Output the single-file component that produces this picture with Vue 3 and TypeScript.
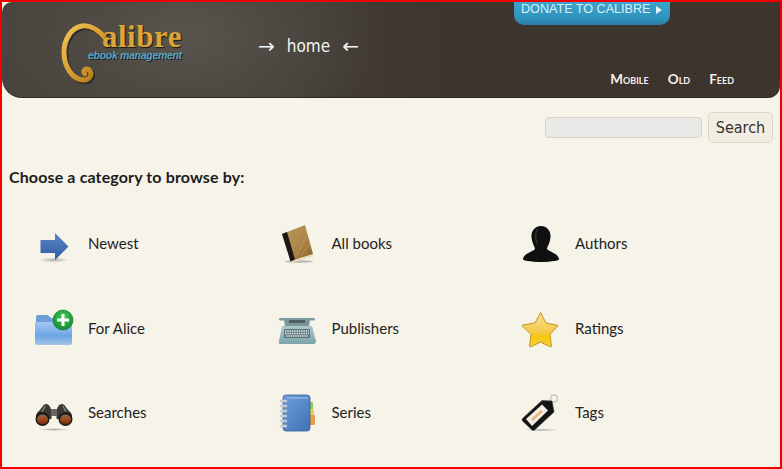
<script setup lang="ts">
interface Cat { key: string; label: string }
const cats: Cat[] = [
  { key: 'newest', label: 'Newest' },
  { key: 'books', label: 'All books' },
  { key: 'authors', label: 'Authors' },
  { key: 'alice', label: 'For Alice' },
  { key: 'publishers', label: 'Publishers' },
  { key: 'ratings', label: 'Ratings' },
  { key: 'searches', label: 'Searches' },
  { key: 'series', label: 'Series' },
  { key: 'tags', label: 'Tags' },
]
</script>

<template>
  <div class="page">
    <header class="masthead">
      <a class="logo">
        <svg class="swirl" width="70" height="70" viewBox="0 0 70 70">
          <defs>
            <linearGradient id="gold" x1="0" y1="0" x2="1" y2="1">
              <stop offset="0" stop-color="#f0c55a" />
              <stop offset="0.55" stop-color="#d59a2c" />
              <stop offset="1" stop-color="#a86f18" />
            </linearGradient>
          </defs>
          <path d="M46 19C39 10 30 5 22 6C10 8 4 21 4 32C4 46 12 60 24 60C32 60 33 50 27 49C24 49 23 52 25 54" fill="none" stroke="#1f1a14" stroke-opacity=".6" stroke-width="5.500" stroke-linecap="round" transform="translate(1.500 1.500)" />
          <path d="M46 19C39 10 30 5 22 6C10 8 4 21 4 32C4 46 12 60 24 60C32 60 33 50 27 49C24 49 23 52 25 54" fill="none" stroke="url(#gold)" stroke-width="5" stroke-linecap="round" />
        </svg>
        <span class="word">alibre</span>
        <span class="tagline">ebook management</span>
      </a>
      <h1 class="title"><span class="arrow">→</span><span>home</span><span class="arrow">←</span></h1>
      <div class="side">
        <a class="donate">DONATE TO CALIBRE<i class="tri"></i></a>
        <nav class="nav">
          <a>Mobile</a>
          <a>Old</a>
          <a>Feed</a>
        </nav>
      </div>
    </header>

    <form class="search" @submit.prevent>
      <input class="query" type="text" />
      <button class="go" type="submit">Search</button>
    </form>

    <h2 class="lead">Choose a category to browse by:</h2>

    <ul class="cats">
      <li v-for="c in cats" :key="c.key" class="cat">
        <svg class="icon" width="40" height="40" viewBox="0 0 40 40">
          <template v-if="c.key === 'newest'">
            <defs>
              <linearGradient id="arrowG" x1="0" y1="0" x2="0" y2="1">
                <stop offset="0" stop-color="#5a86c4" />
                <stop offset="1" stop-color="#2f5ca3" />
              </linearGradient>
              <radialGradient id="sh"><stop offset="0" stop-color="#000" stop-opacity=".3" /><stop offset="1" stop-color="#000" stop-opacity="0" /></radialGradient>
            </defs>
            <ellipse cx="20" cy="37" rx="15" ry="2.500" fill="url(#sh)" />
            <path d="M6.500 17H21V10L34.500 23.500L21 37V30H6.500Z" fill="url(#arrowG)" />
          </template>
          <template v-else-if="c.key === 'books'">
            <defs>
              <linearGradient id="bookG" x1="0" y1="0" x2="1" y2="1">
                <stop offset="0" stop-color="#bb9658" />
                <stop offset=".5" stop-color="#b08a4c" />
                <stop offset="1" stop-color="#8a6128" />
              </linearGradient>
            </defs>
            <ellipse cx="21" cy="38.500" rx="14" ry="1.500" fill="#000" fill-opacity=".22" />
            <path d="M4 11L27 2L35 31L13 38Z" fill="url(#bookG)" />
            <path d="M4 11L9 9L17 36.500L12.500 38.500Z" fill="#1b1815" />
            <path d="M13 38.500L35 31.500L35.500 33L14 40Z" fill="#e6dcc4" />
            <path d="M19 32L30 10M23 33L32 20" stroke="#d8bd8a" stroke-opacity=".45" stroke-width=".8" />
          </template>
          <template v-else-if="c.key === 'authors'">
            <ellipse cx="20" cy="36" rx="18" ry="3" fill="#000" />
            <path d="M20 3C26 3 30 8 29.500 14C29 20 26.500 23 26 26C28 29 37 30 38 36C30 39 10 39 2 36C3 30 12 29 14 26C13.500 23 11 20 10.500 14C10 8 14 3 20 3Z" fill="#101010" />
            <path d="M17 6C14 9 14 15 16 20" stroke="#333" stroke-width="1.500" fill="none" />
          </template>
          <template v-else-if="c.key === 'alice'">
            <defs>
              <linearGradient id="folderG" x1="0" y1="0" x2="0" y2="1">
                <stop offset="0" stop-color="#a3c8f2" />
                <stop offset=".6" stop-color="#6ea5e6" />
                <stop offset="1" stop-color="#a3c4e8" />
              </linearGradient>
              <radialGradient id="plusG" cx=".5" cy=".35" r=".7">
                <stop offset="0" stop-color="#3dc95a" />
                <stop offset="1" stop-color="#0d8a2a" />
              </radialGradient>
            </defs>
            <path d="M2 9C2 7.500 3 7 4 7H14L17 10H30C32 10 33 11 33 12V16H2Z" fill="#6f9ed9" />
            <path d="M1 14H38V35C38 36 37 37 36 37H3C2 37 1 36 1 35Z" fill="url(#folderG)" />
            <circle cx="29" cy="12" r="10" fill="url(#plusG)" stroke="#0a6d20" stroke-width=".6" />
            <path d="M29 6V18M23 12H35" stroke="#fff" stroke-width="3" />
          </template>
          <template v-else-if="c.key === 'publishers'">
            <defs>
              <linearGradient id="typeG" x1="0" y1="0" x2="0" y2="1">
                <stop offset="0" stop-color="#a9cacc" />
                <stop offset="1" stop-color="#7aa4aa" />
              </linearGradient>
            </defs>
            <rect x="1" y="10" width="36" height="2.500" rx="1.200" fill="#7d9a9e" />
            <path d="M6 12L7 19H31L32 12Z" fill="#7d9599" />
            <path d="M11 12H27V15H11Z" fill="#4c5f62" />
            <path d="M4 18H34L38 33C38 35 37 36 36 36H2C1 36 0.500 35 1 33Z" fill="url(#typeG)" />
            <rect x="6" y="21" width="26" height="9" rx="1" fill="#5a7175" />
            <path d="M7 23H31M7 25.500H31M8 28H30" stroke="#e8eeee" stroke-width="1.300" stroke-dasharray="1.500 .8" />
          </template>
          <template v-else-if="c.key === 'ratings'">
            <defs>
              <linearGradient id="starG" x1="0" y1="0" x2="0" y2="1">
                <stop offset="0" stop-color="#f9df8e" />
                <stop offset=".55" stop-color="#f5cb4e" />
                <stop offset=".7" stop-color="#f6c90e" />
                <stop offset="1" stop-color="#f0d040" />
              </linearGradient>
            </defs>
            <path d="M19.500 4.500L25 15L37 17.500L29 26.500L30.500 38C30.500 39 29.500 39 28.500 38.500L19.500 34L10.500 38.500C9.500 39 8.500 39 8.500 38L10 26.500L1.500 18C1 17.500 1.500 17 2 17L14 15Z" fill="url(#starG)" stroke="#c2941c" stroke-width="1" stroke-linejoin="round" />
          </template>
          <template v-else-if="c.key === 'searches'">
            <defs>
              <linearGradient id="lensG" x1="0" y1="0" x2="0" y2="1">
                <stop offset="0" stop-color="#8f6a4a" />
                <stop offset=".5" stop-color="#a0481d" />
                <stop offset="1" stop-color="#6a2a10" />
              </linearGradient>
              <radialGradient id="sh2"><stop offset="0" stop-color="#000" stop-opacity=".3" /><stop offset="1" stop-color="#000" stop-opacity="0" /></radialGradient>
            </defs>
            <ellipse cx="20" cy="37.500" rx="16" ry="1.500" fill="url(#sh2)" />
            <path d="M12 12C15 12 17 15 17.500 20L17.500 27H3C1 25 2 21 5 19C8 16 9 12 12 12Z" fill="#3b3835" />
            <path d="M28 12C25 12 23 15 22.500 20L22.500 27H37C39 25 38 21 35 19C32 16 31 12 28 12Z" fill="#3b3835" />
            <path d="M11 14L8 20M29 14L32 20" stroke="#8c8985" stroke-width="1.200" />
            <rect x="17" y="17" width="6" height="7" fill="#6a6764" />
            <circle cx="8.500" cy="27" r="7" fill="#1c1a18" />
            <circle cx="31.500" cy="27" r="7" fill="#1c1a18" />
            <ellipse cx="8.500" cy="27.500" rx="5.500" ry="5" fill="url(#lensG)" />
            <ellipse cx="31.500" cy="27.500" rx="5.500" ry="5" fill="url(#lensG)" />
          </template>
          <template v-else-if="c.key === 'series'">
            <defs>
              <linearGradient id="noteG" x1="0" y1="0" x2="1" y2="1">
                <stop offset="0" stop-color="#6f9fd8" />
                <stop offset="1" stop-color="#3f72b8" />
              </linearGradient>
            </defs>
            <rect x="30" y="10" width="5" height="13" rx="1" fill="#8cc85a" />
            <rect x="30" y="17" width="6" height="7" fill="#e5d34d" />
            <rect x="30" y="23" width="7" height="10" rx="1" fill="#ef9c43" />
            <rect x="5" y="3" width="27" height="36" rx="3" fill="url(#noteG)" stroke="#34609e" stroke-width=".8" />
            <path d="M9 6H30" stroke="#a9c8ec" stroke-width="1" />
            <path d="M3 9H8M3 14H8M3 19H8M3 24H8M3 29H8M3 34H8" stroke="#c9ccd2" stroke-width="2.400" stroke-linecap="round" />
          </template>
          <template v-else>
            <defs>
              <radialGradient id="sh3"><stop offset="0" stop-color="#000" stop-opacity=".3" /><stop offset="1" stop-color="#000" stop-opacity="0" /></radialGradient>
            </defs>
            <ellipse cx="20" cy="38" rx="17" ry="1.600" fill="url(#sh3)" />
            <circle cx="33" cy="6.500" r="3.500" fill="none" stroke="#c8c8c4" stroke-width="1.600" />
            <path d="M1.500 26.500L21 8.500L31 9L33 20L13.500 38C12.500 38.500 11.500 38.500 10.500 37.500L1.500 29C1 28 1 27.500 1.500 26.500Z" fill="#141414" stroke="#333" stroke-width=".6" />
            <path d="M5 27L21 12.500L27 18.500L11 34Z" fill="#f3efe4" />
            <path d="M10 27L20 18L22 19.500L12 29Z" fill="#eeb47c" />
          </template>
        </svg>
        <a class="label">{{ c.label }}</a>
      </li>
    </ul>
  </div>
</template>

<style>
html, body { margin: 0; padding: 0; background: #ffffff; }
</style>

<style scoped>
.page {
  box-sizing: border-box;
  width: 782px;
  height: 469px;
  border: 2px solid #f00000;
  background: #f6f3e9;
  overflow: hidden;
  font-family: Lato, "Open Sans", sans-serif;
  color: #222;
}
.masthead {
  display: flex;
  align-items: flex-start;
  height: 96px;
  border-radius: 10px 0 12px 20px;
  background:
    radial-gradient(ellipse 200px 120px at 180px 35px, #59544e 0%, rgba(82, 77, 71, .7) 45%, rgba(70, 65, 59, 0) 100%),
    linear-gradient(90deg, #47433d 0%, #46413b 30%, #3c342d 62%, #3c342d 100%);
  box-shadow: inset 0 -1px 0 #2c2722;
}
.logo {
  position: relative;
  display: block;
  flex: none;
  width: 130px;
  height: 70px;
  margin: 18px 0 0 58px;
}
.swirl { position: absolute; left: 0; top: 0; }
.word {
  position: absolute;
  left: 42px;
  top: 4px;
  font: bold 31px/25px "Liberation Serif", serif;
  letter-spacing: .5px;
  color: #dca636;
  text-shadow: 1px 1px 1px #191510;
}
.tagline {
  position: absolute;
  left: 28px;
  top: 29px;
  font: italic bold 10.500px/13px "Liberation Sans", sans-serif;
  letter-spacing: -.3px;
  color: #54a7c7;
  text-shadow: 1px 1px 0 #24211d;
  white-space: nowrap;
}
.title {
  display: flex;
  align-items: center;
  gap: 12px;
  flex: none;
  width: 265px;
  margin: 32px 0 0 68px;
  font: normal 17px/24px "DejaVu Sans", sans-serif;
  font-stretch: condensed;
  color: #f4f4f0;
}
.arrow { font-family: "DejaVu Sans", sans-serif; font-size: 20px; font-stretch: normal; }
.side {
  flex: none;
  display: flex;
  flex-direction: column;
  align-items: flex-start;
  width: 220px;
  height: 96px;
  margin-left: -9px;
}
.donate {
  display: flex;
  align-items: flex-start;
  box-sizing: border-box;
  width: 156px;
  height: 23px;
  padding: 1px 0 0 7px;
  border-radius: 0 0 10px 10px;
  background: linear-gradient(180deg, #3ca4cd 0%, #2f93bd 70%, #2a7ea6 100%);
  font: 12.600px/13px "Liberation Sans", sans-serif;
  color: #dceef5;
  white-space: nowrap;
}
.tri {
  width: 0;
  height: 0;
  margin: 3px 0 0 6px;
  border-left: 6px solid #e6f2f7;
  border-top: 4px solid transparent;
  border-bottom: 4px solid transparent;
}
.nav {
  display: flex;
  justify-content: flex-end;
  gap: 19px;
  width: 100%;
  margin-top: auto;
  padding-bottom: 10px;
  font: bold 13.500px/18px Lato, sans-serif;
  font-variant: small-caps;
  color: #f2f0ea;
}
.search {
  display: flex;
  justify-content: flex-end;
  align-items: center;
  gap: 6px;
  height: 31px;
  margin-top: 14px;
  padding-right: 7px;
}
.query {
  box-sizing: border-box;
  width: 157px;
  height: 21px;
  padding: 0;
  border: 1px solid #d9d4c5;
  border-radius: 4px;
  background: #e9e9e7;
}
.go {
  box-sizing: border-box;
  width: 65px;
  height: 31px;
  padding: 0;
  border: 1px solid #ded7c7;
  border-radius: 5px;
  background: #f3eee2;
  font: 16px "DejaVu Sans", sans-serif;
  font-stretch: condensed;
  color: #333;
}
.lead {
  margin: 24px 0 0 7px;
  font: bold 16px/20px Lato, sans-serif;
  letter-spacing: .13px;
  color: #1c1c1c;
}
.cats {
  display: grid;
  grid-template-columns: repeat(3, 243.500px);
  grid-auto-rows: 84.500px;
  margin: 14px 0 0 32px;
  padding: 0;
  list-style: none;
}
.cat {
  display: flex;
  align-items: center;
  gap: 14px;
}
.icon { flex: none; }
.label {
  font-size: 15px;
  line-height: 20px;
  color: #222;
}
</style>
